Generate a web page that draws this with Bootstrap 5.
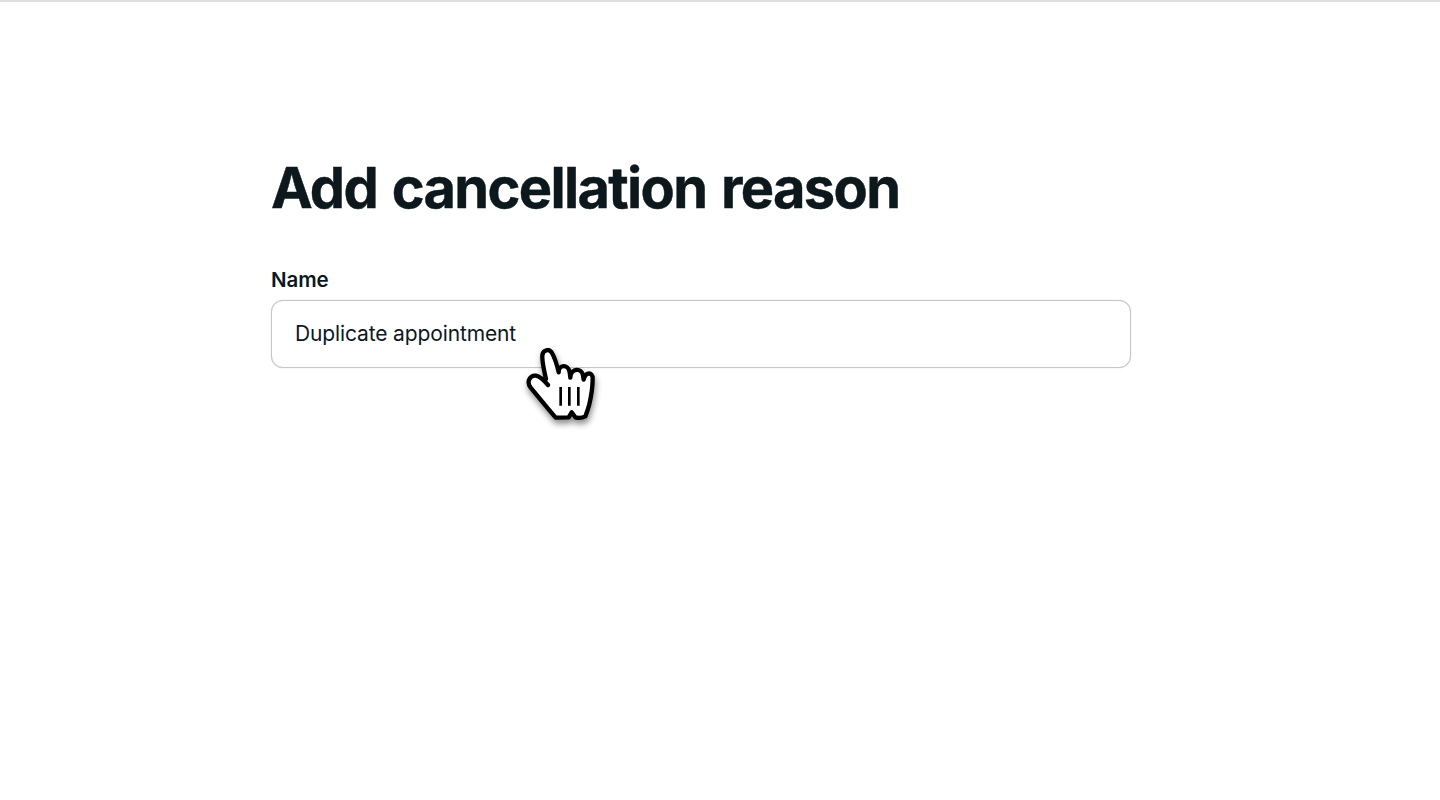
<!DOCTYPE html>
<html lang="en">
<head>
<meta charset="utf-8">
<title>Add cancellation reason</title>
<link rel="stylesheet" href="https://cdn.jsdelivr.net/npm/bootstrap@5.3.0/dist/css/bootstrap.min.css">
<style>
html,body{height:100%;}
body{background:#fff;color:#0d181d;font-family:Inter,"Liberation Sans",sans-serif;overflow:hidden;border-top:2px solid #dfdfdf;}
.shell{width:860px;margin-left:271px;padding-top:154px;}
.page-title{font-family:Inter,"Liberation Sans",sans-serif;font-size:56px;line-height:64px;font-weight:700;letter-spacing:-1.68px;word-spacing:3px;margin:0 0 48px;color:#0d181d;-webkit-text-stroke:.4px #0d181d;}
.field-label{font-size:20.5px;line-height:24px;font-weight:600;margin:0 0 8px;letter-spacing:-.1px;color:#0d181d;}
.field-wrap{position:relative;}
.reason-input.form-control{height:68px;border:1px solid #c6c6c6;border-radius:12px;padding:0 23px 2px;font-size:21px;letter-spacing:-.13px;color:#0d181d;background:#fff;box-shadow:0 0 1px #bdbdbd;}
.hand{position:absolute;left:239px;top:35px;width:100px;height:95px;filter:drop-shadow(1px 4px 3px rgba(0,0,0,.45));}
</style>
</head>
<body>
<main class="shell">
  <h1 class="page-title">Add cancellation reason</h1>
  <form>
    <label class="form-label field-label d-block" for="reason">Name</label>
    <div class="field-wrap">
      <input id="reason" class="form-control reason-input" type="text" value="Duplicate appointment">
      <svg class="hand" viewBox="0 0 300 285" aria-hidden="true">
        <path d="M108 132C102 104 96 82 97 62C98 44 118 40 126 54C134 68 140 86 146 112C146 88 174 86 179 112L181 128C183 98 216 98 219 122L221 134C226 110 248 110 248 130C248 156 244 182 238 208C234 224 230 234 226 244C214 250 204 249 196 247L185 232L176 247L137 248C118 226 90 192 62 158C48 140 60 120 78 122C88 124 100 134 114 150" fill="#fff" stroke="#000" stroke-width="13" stroke-linejoin="round" stroke-linecap="round"/>
        <path d="M152 156V212M178 156V212M205 156V212" stroke="#000" stroke-width="8" fill="none"/>
      </svg>
    </div>
  </form>
</main>
<script src="https://cdn.jsdelivr.net/npm/bootstrap@5.3.0/dist/js/bootstrap.bundle.min.js"></script>
</body>
</html>
